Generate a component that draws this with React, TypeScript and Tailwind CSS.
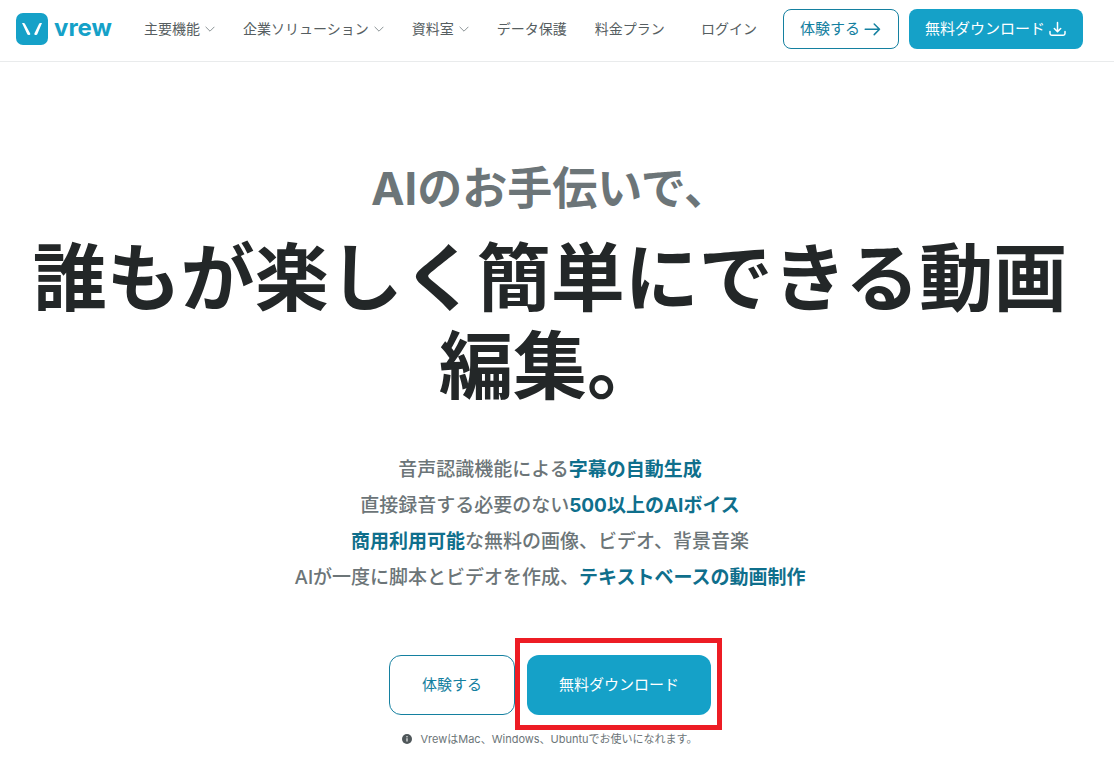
import type { ReactNode } from "react";

interface NavItem {
  label: string;
  hasMenu: boolean;
}

interface Feature {
  id: string;
  content: ReactNode;
}

const NAV_ITEMS: NavItem[] = [
  { label: "主要機能", hasMenu: true },
  { label: "企業ソリューション", hasMenu: true },
  { label: "資料室", hasMenu: true },
  { label: "データ保護", hasMenu: false },
  { label: "料金プラン", hasMenu: false },
];

function Strong({ children }: { children: ReactNode }) {
  return <strong className="font-bold text-[#0f6f8c]">{children}</strong>;
}

const FEATURES: Feature[] = [
  {
    id: "subtitles",
    content: <>音声認識機能による<Strong>字幕の自動生成</Strong></>,
  },
  {
    id: "voices",
    content: <>直接録音する必要のない<Strong>500以上のAIボイス</Strong></>,
  },
  {
    id: "assets",
    content: <><Strong>商用利用可能</Strong>な無料の画像、ビデオ、背景音楽</>,
  },
  {
    id: "text-to-video",
    content: <>AIが一度に脚本とビデオを作成、<Strong>テキストベースの動画制作</Strong></>,
  },
];

function Logo() {
  return (
    <a href="#" className="flex items-center gap-1.5 text-[#15a1c8]">
      <svg width="32" height="32" viewBox="0 0 32 32" aria-hidden="true">
        <rect width="32" height="32" rx="7" fill="currentColor" />
        <path d="M6 10h1.7q.8 0 1.2.8l5.3 9.8q.5 1.4-.8 1.4h-.9q-.8 0-1.2-.8z" fill="#fff" />
        <path d="M26 10h-1.7q-.8 0-1.2.8l-4.7 9.8q-.5 1.4.8 1.4h.9q.8 0 1.2-.8z" fill="#fff" />
      </svg>
      <span className="pb-0.5 text-2xl leading-8 font-bold">vrew</span>
    </a>
  );
}

function ChevronIcon() {
  return (
    <svg width="10" height="6" viewBox="0 0 10 6" fill="none" stroke="#8b9396" aria-hidden="true">
      <path d="M.6.8 5 5.2 9.4.8" />
    </svg>
  );
}

function ArrowIcon() {
  return (
    <svg width="18" height="16" viewBox="0 0 18 16" fill="none" stroke="currentColor" strokeWidth="1.5" strokeLinecap="round" strokeLinejoin="round" aria-hidden="true">
      <path d="M1.2 8.3h14.3M10.2 3 15.5 8.3 10.2 13.6" />
    </svg>
  );
}

function DownloadIcon() {
  return (
    <svg width="18" height="16" viewBox="0 0 18 16" fill="none" stroke="currentColor" strokeWidth="1.5" strokeLinecap="round" strokeLinejoin="round" aria-hidden="true">
      <path d="M8.5 1.5v9M5.3 7.5 8.5 10.7 11.7 7.5" />
      <path d="M1 10.5v2q0 1.7 1.7 1.7h11.6q1.7 0 1.7-1.7v-2" />
    </svg>
  );
}

function InfoIcon() {
  return (
    <svg width="10" height="10" viewBox="0 0 10 10" aria-hidden="true">
      <circle cx="5" cy="5" r="5" fill="#4f575a" />
      <path d="M5 4.2v3.4" stroke="#fff" strokeWidth="1.1" />
      <circle cx="5" cy="2.7" r=".7" fill="#fff" />
    </svg>
  );
}

function Header() {
  return (
    <header className="flex h-[62px] items-center border-b border-[#e9ebec] pb-1 pr-[31px] pl-4 text-sm whitespace-nowrap text-[#565e61]">
      <Logo />
      <nav className="ml-8 flex items-center gap-7">
        {NAV_ITEMS.map((item) =>
          item.hasMenu ? (
            <button key={item.label} type="button" className="flex items-center gap-[5px]">
              {item.label}
              <ChevronIcon />
            </button>
          ) : (
            <a key={item.label} href="#">
              {item.label}
            </a>
          )
        )}
      </nav>
      <a href="#" className="ml-auto">
        ログイン
      </a>
      <button
        type="button"
        className="ml-[26px] flex h-10 items-center gap-1 rounded-lg border border-[#1480a0] px-4 text-[15px] text-[#1480a0]"
      >
        体験する
        <ArrowIcon />
      </button>
      <button
        type="button"
        className="ml-2.5 flex h-10 items-center gap-1 rounded-lg bg-[#15a1c8] px-4 text-[15px] text-white"
      >
        無料ダウンロード
        <DownloadIcon />
      </button>
    </header>
  );
}

export default function App() {
  return (
    <div
      lang="ja"
      className="min-h-screen bg-white font-['Inter','Noto_Sans_CJK_JP',sans-serif]"
    >
      <Header />
      <main className="flex flex-col items-center pt-[98px] pr-[30px] pb-5 pl-4 text-center">
        <p className="text-[45px] leading-[58px] font-bold text-[#6c7578]">AIのお手伝いで、</p>
        <h1 className="mt-4 text-[74px] leading-[88px] font-bold text-[#232728]">
          誰もが楽しく簡単にできる動画編集。
        </h1>
        <ul className="mt-[42px] text-[19px] leading-9 font-medium text-[#6c7578]">
          {FEATURES.map((feature) => (
            <li key={feature.id}>{feature.content}</li>
          ))}
        </ul>

        <div className="mt-[59px] flex gap-3 text-[15px]">
          <button
            type="button"
            className="h-[60px] rounded-xl border border-[#1480a0] px-8 text-[#1480a0]"
          >
            体験する
          </button>
          <div className="relative">
            <button type="button" className="h-[60px] rounded-xl bg-[#15a1c8] px-8 text-white">
              無料ダウンロード
            </button>
            <div className="pointer-events-none absolute -top-[17px] -right-[11px] -bottom-[15px] -left-3 border-5 border-[#ed1c24]" />
          </div>
        </div>

        <p className="mt-4 flex items-center gap-2 text-[11px] leading-4 text-[#6c7578]">
          <InfoIcon />
          VrewはMac、Windows、Ubuntuでお使いになれます。
        </p>
      </main>
    </div>
  );
}
